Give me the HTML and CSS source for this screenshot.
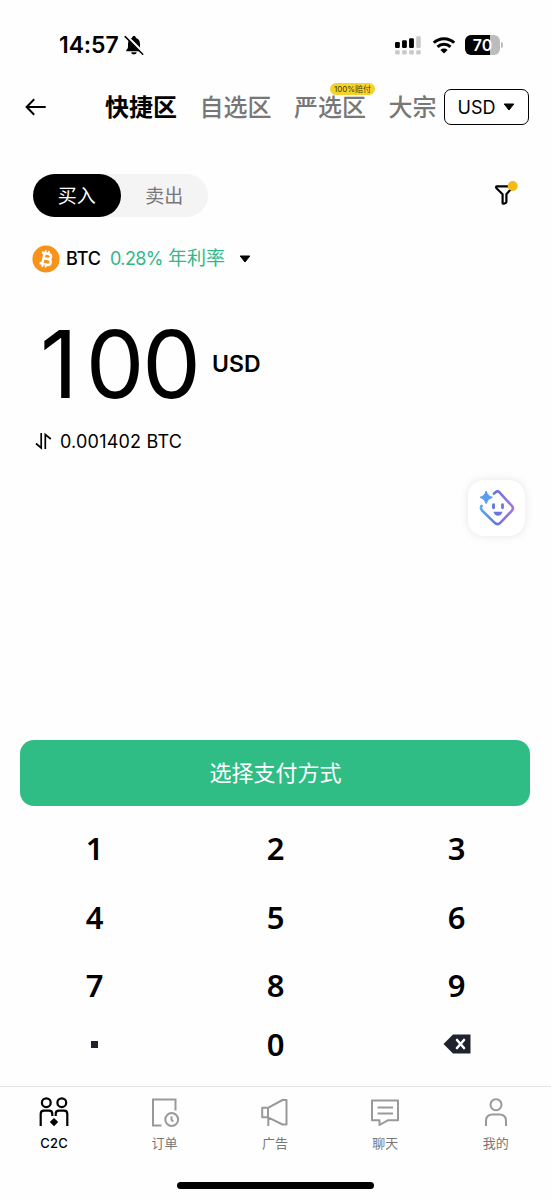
FILE: index.html
```html
<!DOCTYPE html>
<html lang="zh-CN">
<head>
<meta charset="utf-8">
<title>C2C</title>
<link rel="stylesheet" href="styles.css">
</head>
<body>
<div class="app">
  <div class="status">
    <span class="time">14:57</span>
    <svg class="bell" width="20" height="20" viewBox="0 0 20 20">
      <path d="M2 16.2c0-1.5 2-2 2-4.2V9c0-3.200 1.600-5.200 4-5.900C8.200 1.600 9 1 10 1s1.800.6 2 2.100c2.400.7 4 2.700 4 5.900v3c0 2.200 2 2.700 2 4.200z" fill="#000"/>
      <path d="M7.300 17.300h5.400a2.700 2.100 0 0 1-5.400 0z" fill="#000"/>
      <path d="M2.200.8 19.600 18" stroke="#fff" stroke-width="2.800"/>
      <path d="M1.200 1.600 18.700 19.200" stroke="#000" stroke-width="1.500" stroke-linecap="round"/>
    </svg>
    <div class="status-icons">
      <svg width="27" height="20" viewBox="0 0 28 20">
        <g fill="#000"><rect x="0" y="7" width="5" height="6" rx="1.300"/><rect x="7.300" y="5" width="5" height="8" rx="1.300"/><rect x="14.600" y="3" width="5" height="10" rx="1.300"/></g>
        <g fill="#c9c9c9"><rect x="22" y="1" width="4.700" height="12" rx="1.300"/><rect x="0" y="15.500" width="5" height="4.300" rx="1.200"/><rect x="7.300" y="15.500" width="5" height="4.300" rx="1.200"/><rect x="14.600" y="15.500" width="5" height="4.300" rx="1.200"/><rect x="22" y="15.500" width="4.700" height="4.300" rx="1.200"/></g>
      </svg>
      <svg class="wifi" width="24" height="18" viewBox="0 0 24 18">
        <g fill="none" stroke="#000" stroke-width="3"><path d="M1.800 6.800a14.600 14.600 0 0 1 20.400 0"/><path d="M5.500 10.900a9.300 9.300 0 0 1 13 0"/></g>
        <path d="M12 17.400 8.400 13.900a5.300 5.300 0 0 1 7.200 0z" fill="#000"/>
      </svg>
      <div class="battery"><span>70</span></div><i class="battery-cap"></i>
    </div>
  </div>

  <header class="header">
    <svg class="back" width="22" height="18" viewBox="0 0 22 18" fill="none" stroke="#000" stroke-width="2"><path d="M20.700 9H1.800M9.200 1.300 1.600 9l7.600 7.700"/></svg>
    <nav class="tabs">
      <span class="tab tab-on">快捷区</span>
      <span class="tab">自选区</span>
      <span class="tab">严选区<b class="badge">100%赔付</b></span>
      <span class="tab">大宗</span>
    </nav>
    <button class="currency">USD<svg width="12" height="8" viewBox="0 0 12 8"><path d="M1.200 1h9.600L6 7z" stroke="#000" stroke-linejoin="round"/></svg></button>
  </header>

  <div class="trade">
    <div class="toggle"><span class="side side-on">买入</span><span class="side">卖出</span></div>
    <svg class="filter" width="24" height="26" viewBox="0 0 24 26">
      <path d="M3 5.300h14.600v2.100l-5.200 5.800v7.800c0 1-3.800 2.500-3.800.9v-8.700L2.500 7.200C1.800 6.300 2 5.300 3 5.300z" fill="none" stroke="#000" stroke-width="2.200" stroke-linejoin="round"/>
      <circle cx="18.700" cy="5" r="5" fill="#f3ba19"/>
    </svg>
  </div>

  <div class="coin">
    <svg width="28" height="28" viewBox="0 0 28 28">
      <circle cx="14" cy="14" r="13.600" fill="#f7931a"/>
      <g transform="rotate(13 14 14)" fill="none" stroke="#fff">
        <path d="M8.700 8.600h6.800c3.800 0 3.800 5 0 5h-4.100 4.800c4.200 0 4.200 5.800 0 5.800H8.700M11.400 8.600v10.800" stroke-width="2.500"/>
        <path d="M12 5.500v3M15.300 5.500v3M12 19.500v3M15.300 19.500v3" stroke-width="1.800"/>
      </g>
    </svg>
    <span class="coin-name">BTC</span>
    <span class="rate"><span class="percent">0.28%</span><span class="rate-label">年利率</span></span>
    <svg class="caret" width="12" height="8" viewBox="0 0 12 8"><path d="M1.200 1h9.600L6 7z" stroke="#000" stroke-linejoin="round"/></svg>
  </div>

  <div class="amount"><span class="digits"><span class="one">1</span>00</span><span class="unit">USD</span></div>

  <div class="convert">
    <svg width="18" height="18" viewBox="0 0 18 18" fill="none" stroke="#000" stroke-width="1.700"><path d="M1 11.500 6.200 16V1M10.300 17V2.500L15.800 7"/></svg>
    <span>0.001402 BTC</span>
  </div>

  <div class="assistant">
    <svg width="36" height="38" viewBox="0 0 36 38">
      <defs><linearGradient id="tint" x1="0" y1="0" x2="36" y2="0" gradientUnits="userSpaceOnUse"><stop offset="0" stop-color="#57b2f5"/><stop offset=".48" stop-color="#6475df"/><stop offset="1" stop-color="#a977df"/></linearGradient></defs>
      <path d="M15 4.600 16.500 3.300q2-1.800 4 0L32.700 16.700q2.500 2.600 0 5.200L21.500 33.700q-3 3-6 0L3.300 21.800q-2.300-2.500-.7-5" fill="none" stroke="url(#tint)" stroke-width="2.600" stroke-linecap="round"/>
      <path d="M7.200 2q1.300 5.200 6.200 6.300-4.900 1.200-6.200 6.400Q5.900 9.500 1 8.300 5.900 7.200 7.200 2z" fill="#589cf0" stroke="#589cf0" stroke-linejoin="round"/>
      <path d="M14.500 15.700v3" stroke="#6675df" stroke-width="2.900" stroke-linecap="round"/><path d="M23.500 15.700v3" stroke="#8275df" stroke-width="2.900" stroke-linecap="round"/>
      <path d="M14.500 22.700h9q-1 4-4.500 4t-4.500-4z" fill="url(#tint)"/>
    </svg>
  </div>

  <button class="pay">选择支付方式</button>

  <div class="keypad">
    <span>1</span><span>2</span><span>3</span>
    <span>4</span><span>5</span><span>6</span>
    <span>7</span><span>8</span><span>9</span>
    <span><i class="dot"></i></span><span>0</span>
    <span><svg width="28" height="20" viewBox="0 0 28 20"><path d="M10 .5h17.500v19H10L.5 10z" fill="#20232d"/><path d="m14 6 7 8M21 6l-7 8" stroke="#fff" stroke-width="2.600" stroke-linecap="round"/></svg></span>
  </div>

  <nav class="bottom">
    <a class="item item-on">
      <svg width="32" height="32" viewBox="0 0 32 32" fill="none" stroke="#000" stroke-width="2.200"><circle cx="8.300" cy="6.700" r="4.400"/><circle cx="23.800" cy="6.700" r="4.400"/><path d="M2.700 30V18q0-3.300 3.300-3.300h5q3.300 0 3.300 3.300v2M17.700 20v-2q0-3.300 3.300-3.300h5q3.300 0 3.300 3.300v12"/><path d="m16 21.900 4.200 4.200-4.200 4.200-4.200-4.200z" fill="#000" stroke="none"/></svg>
      <span>C2C</span>
    </a>
    <a class="item">
      <svg width="32" height="32" viewBox="0 0 32 32" fill="none" stroke="#999" stroke-width="2"><path d="M12.500 29.500H4v-26h22.500v11"/><circle cx="22.700" cy="23.500" r="6.400"/><path d="M22.500 20.500v3.200l1.600 2"/></svg>
      <span>订单</span>
    </a>
    <a class="item">
      <svg width="32" height="32" viewBox="0 0 32 32" fill="none" stroke="#999" stroke-width="2" stroke-linejoin="round"><path d="M3.200 11.800H9v9.500H3.200zM9 11.800 23.500 4h4v24.500h-4L9 21.300M9.300 21v9"/></svg>
      <span>广告</span>
    </a>
    <a class="item">
      <svg width="32" height="32" viewBox="0 0 32 32" fill="none" stroke="#999" stroke-width="2" stroke-linejoin="round"><path d="M3 4.500h26v19.800H18.700L10.500 29v-4.700H3zM8.500 11.500H24M8.500 17.500H24"/></svg>
      <span>聊天</span>
    </a>
    <a class="item">
      <svg width="32" height="32" viewBox="0 0 32 32" fill="none" stroke="#999" stroke-width="2"><circle cx="16" cy="8.700" r="5.500"/><path d="M6 30v-5q0-6.500 6.500-6.500h7q6.500 0 6.500 6.500v5"/></svg>
      <span>我的</span>
    </a>
  </nav>
  <div class="home"></div>
</div>
</body>
</html>
```

FILE: styles.css
```css
* { box-sizing: border-box; }
body { margin: 0; background: #fff; color: #000; font-family: Inter, "Noto Sans CJK SC", sans-serif; }
svg { display: block; flex: none; }
button { font-family: inherit; cursor: pointer; }
.app { position: relative; width: 551px; height: 1200px; display: flex; flex-direction: column; overflow: hidden; background: #fefefe; }
.app > * { flex: none; }

.status { height: 80px; padding: 10px 48px 0 59px; display: flex; align-items: center; }
.time { font-size: 23px; font-weight: 600; letter-spacing: -.1px; line-height: 30px; width: 65px; white-space: nowrap; }
.status-icons { margin-left: auto; display: flex; align-items: center; }
.wifi { margin: 0 9px 0 10px; }
.battery { width: 35px; height: 20px; border-radius: 6px; background: linear-gradient(90deg, #000 70%, #bcbcbc 70%); color: #fff; font-size: 16px; font-weight: 600; line-height: 20px; text-align: center; }
.battery-cap { width: 2px; height: 6px; margin-left: 1px; border-radius: 0 2px 2px 0; background: #bcbcbc; }

.header { height: 54px; padding: 0 22px 0 25px; display: flex; align-items: center; }
.back { margin-right: 58px; }
.tabs { display: flex; gap: 22.500px; width: 339px; margin-top: -2px; }
.tab { position: relative; font: 500 24px/36px "Noto Sans CJK SC", sans-serif; color: #777; white-space: nowrap; }
.tab-on { color: #000; font-weight: 700; }
.badge { position: absolute; left: 36px; top: -5px; width: 45px; height: 12px; border-radius: 6px; background: #f5d328; color: #4a3b0c; font: 400 8px/12px Inter, "Noto Sans CJK SC", sans-serif; text-align: center; }
.currency { width: 85px; height: 36px; padding: 0; display: flex; align-items: center; justify-content: center; gap: 8px; border: 1.500px solid #000; border-radius: 7px; background: #fff; font-size: 18px; color: #000; }

.trade { height: 83px; padding: 40px 33px 0 33px; display: flex; justify-content: space-between; }
.toggle { width: 175px; height: 43px; display: flex; border-radius: 22px; background: #f4f4f4; }
.side { width: 88px; border-radius: 22px; color: #777; font: 400 19px/41px "Noto Sans CJK SC", sans-serif; text-align: center; }
.side-on { background: #000; color: #fff; }
.filter { margin-top: 7px; }

.coin { height: 83px; padding-left: 32px; display: flex; align-items: center; }
.coin-name { width: 44px; padding-left: 6px; margin-right: 6px; font-size: 18px; font-weight: 500; letter-spacing: -.1px; }
.rate { width: 115px; margin-right: 14px; color: #32b887; display: flex; align-items: center; justify-content: space-between; white-space: nowrap; }
.percent { font-size: 18px; letter-spacing: -.6px; }
.rate-label { font: 400 19px/24px "Noto Sans CJK SC", sans-serif; margin-top: -3px; }

.amount { height: 128px; padding-left: 40px; display: flex; align-items: center; }
.digits { width: 172px; font-size: 93px; line-height: 110px; font-weight: 400; letter-spacing: -2.200px; white-space: nowrap; }
.one { letter-spacing: 8px; }
.unit { font-size: 23px; font-weight: 600; }
.convert { height: 26px; padding-left: 35px; display: flex; align-items: center; gap: 7px; font-size: 18px; letter-spacing: .2px; white-space: nowrap; }

.assistant { position: absolute; left: 468px; top: 480px; width: 57px; height: 56px; display: flex; align-items: center; justify-content: center; border-radius: 16px; background: #fff; box-shadow: 0 0 10px rgba(0,0,0,.1); }

.pay { width: 510px; height: 66px; margin: 286px 0 0 20.400px; padding: 0 0 3px; border: 0; border-radius: 14px; background: #2fbd85; color: #fff; font: 400 22px/63px "Noto Sans CJK SC", sans-serif; }
.keypad { height: 280px; margin: 0 4px; padding-top: 8px; display: grid; grid-template-columns: repeat(3, 181px); grid-template-rows: 69px 69px 67px 52px; font: 600 31px/40px "Noto Sans", sans-serif; }
.keypad span { display: flex; align-items: center; justify-content: center; padding-bottom: 2px; }
.dot { width: 7px; height: 7px; background: #20232d; }

.bottom { height: 80px; padding: 9px 0 0; border-top: 1px solid #e5e5e5; display: grid; grid-template-columns: repeat(5, 110.400px); margin-left: -1px; }
.item { display: flex; flex-direction: column; align-items: center; gap: 6px; color: #777; font: 400 13px/18px "Noto Sans CJK SC", sans-serif; }
.item-on { color: #000; font-family: Inter, sans-serif; font-weight: 500; letter-spacing: .3px; }
.home { width: 197px; height: 7px; margin: 16px 0 0 177px; border-radius: 4px; background: #000; }
```
